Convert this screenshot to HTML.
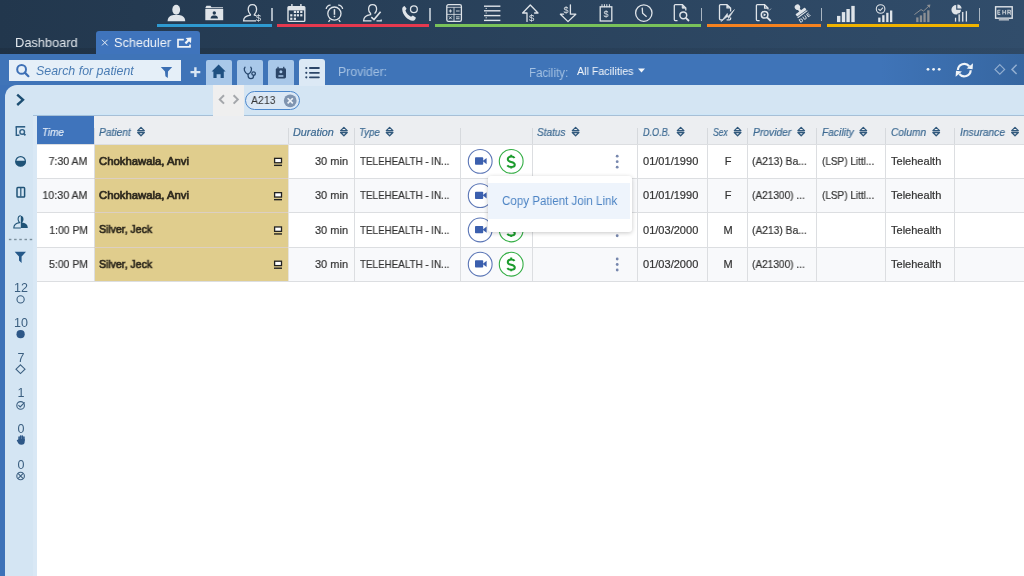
<!DOCTYPE html>
<html><head><meta charset="utf-8">
<style>
*{box-sizing:border-box;margin:0;padding:0}
html,body{width:1024px;height:576px;overflow:hidden;background:#fff;font-family:"Liberation Sans",sans-serif}
div{position:absolute;white-space:nowrap}
.t{line-height:1;will-change:transform}
</style></head><body>

<div style="left:0px;top:0px;width:1024px;height:54px;background:linear-gradient(90deg,#22374d 0%,#314d6b 100%);"></div>
<div style="left:0px;top:48px;width:1024px;height:6px;background:linear-gradient(90deg,rgba(0,0,0,0.10),rgba(0,0,0,0.05));"></div>
<div style="left:157px;top:24px;width:115px;height:3px;background:#2e9ad1;"></div>
<div style="left:277px;top:24px;width:152px;height:3px;background:#e5394f;"></div>
<div style="left:435px;top:24px;width:266px;height:3px;background:#79c25a;"></div>
<div style="left:707px;top:24px;width:114px;height:3px;background:#f5821f;"></div>
<div style="left:827px;top:24px;width:152px;height:3px;background:#f0b300;"></div>
<div style="left:271.25px;top:7.6px;width:1.5px;height:13.2px;background:#aab6c2;"></div>
<div style="left:429.25px;top:7.6px;width:1.5px;height:13.2px;background:#aab6c2;"></div>
<div style="left:700.75px;top:7.6px;width:1.5px;height:13.2px;background:#aab6c2;"></div>
<div style="left:820.75px;top:7.6px;width:1.5px;height:13.2px;background:#aab6c2;"></div>
<div style="left:978.75px;top:7.6px;width:1.5px;height:13.2px;background:#aab6c2;"></div>
<div class="t" style="left:15.3px;top:36.20px;font-size:13px;color:#e2e7ec;;transform:scaleX(0.9873);transform-origin:0 0">Dashboard</div>
<div style="left:96px;top:31px;width:104px;height:23px;background:#3f74bc;border-radius:3px 3px 0 0"></div>
<div class="t" style="left:113.8px;top:36.00px;font-size:13px;color:#f2f5f9;;transform:scaleX(0.9736);transform-origin:0 0">Scheduler</div>
<div style="left:0px;top:54px;width:1024px;height:50px;background:#3d72b8;"></div>
<div style="left:0px;top:54px;width:1024px;height:31px;background:linear-gradient(90deg,#3f74b8 0%,#3f74b8 86%,#3666a0 100%);"></div>
<div style="left:5px;top:85px;width:1019px;height:31px;background:#d4e5f3;border-radius:12px 0 0 0"></div>
<div style="left:33px;top:114px;width:180px;height:1px;background:#cde6f8;"></div>
<div style="left:33px;top:115px;width:180px;height:1px;background:#a7bfd6;"></div>
<div style="left:244px;top:114px;width:780px;height:1px;background:#cde6f8;"></div>
<div style="left:244px;top:115px;width:780px;height:1px;background:#a7bfd6;"></div>
<div style="left:0px;top:85px;width:5px;height:491px;background:#3d72b8;"></div>
<div style="left:5px;top:116px;width:32px;height:460px;background:#d4e5f3;"></div>
<div style="left:33px;top:116px;width:3.5px;height:460px;background:#d9e8f5;"></div>
<div style="left:8.5px;top:60px;width:172.5px;height:21px;background:#e5eff8;"></div>
<div class="t" style="left:35.5px;top:64.90px;font-size:12.4px;color:#4a7cb4;font-style:italic;transform:scaleX(0.9978);transform-origin:0 0">Search for patient</div>
<div style="left:206px;top:60px;width:26px;height:25px;background:#a9c8e9;border-radius:2px 2px 0 0"></div>
<div style="left:237px;top:60px;width:26px;height:25px;background:#a9c8e9;border-radius:2px 2px 0 0"></div>
<div style="left:268px;top:60px;width:26px;height:25px;background:#a9c8e9;border-radius:2px 2px 0 0"></div>
<div style="left:299px;top:59px;width:26px;height:27px;background:#dce9f5;border-radius:3px 3px 0 0"></div>
<div class="t" style="left:338.3px;top:66.02px;font-size:12.5px;color:#a3c0e2;;transform:scaleX(0.9814);transform-origin:0 0">Provider:</div>
<div class="t" style="left:529.2px;top:66.82px;font-size:12.5px;color:#a3c0e2;;transform:scaleX(0.9227);transform-origin:0 0">Facility:</div>
<div class="t" style="left:577.2px;top:66.29px;font-size:11px;color:#f3f6fa;;transform:scaleX(0.9728);transform-origin:0 0">All Facilities</div>
<div style="left:213px;top:85px;width:31px;height:31.5px;background:#efefef;"></div>
<div style="left:244.6px;top:91px;width:55px;height:18.8px;background:#dbe8f5;border:1.6px solid #4d88cc;border-radius:10px"></div>
<div class="t" style="left:250.5px;top:94.81px;font-size:11.8px;color:#333;;transform:scaleX(0.8925);transform-origin:0 0">A213</div>
<div style="left:37px;top:116px;width:987px;height:460px;background:#ffffff;"></div>
<div style="left:37px;top:116px;width:987px;height:28.2px;background:#eceef1;"></div>
<div style="left:37px;top:116px;width:57px;height:28.2px;background:#3f74bc;"></div>
<div style="left:94px;top:144.2px;width:194px;height:34.30000000000001px;background:#e0cd8d;"></div>
<div style="left:37px;top:178.5px;width:987px;height:34.30000000000001px;background:#f8f9fb;"></div>
<div style="left:94px;top:178.5px;width:194px;height:34.30000000000001px;background:#e0cd8d;"></div>
<div style="left:94px;top:212.8px;width:194px;height:34.29999999999998px;background:#e0cd8d;"></div>
<div style="left:37px;top:247.1px;width:987px;height:34.20000000000002px;background:#f8f9fb;"></div>
<div style="left:94px;top:247.1px;width:194px;height:34.20000000000002px;background:#e0cd8d;"></div>
<div style="left:37px;top:143.7px;width:987px;height:1px;background:#dcdee1;"></div>
<div style="left:37px;top:178.0px;width:987px;height:1px;background:#dcdee1;"></div>
<div style="left:37px;top:212.3px;width:987px;height:1px;background:#dcdee1;"></div>
<div style="left:37px;top:246.6px;width:987px;height:1px;background:#dcdee1;"></div>
<div style="left:37px;top:280.8px;width:987px;height:1px;background:#dcdee1;"></div>
<div style="left:93.5px;top:144.2px;width:1px;height:137.10000000000002px;background:#dcdee1;"></div>
<div style="left:93.5px;top:128px;width:1px;height:16.2px;background:#d6d9dd;"></div>
<div style="left:287.5px;top:144.2px;width:1px;height:137.10000000000002px;background:#e6e3dc;"></div>
<div style="left:287.5px;top:128px;width:1px;height:16.2px;background:#d6d9dd;"></div>
<div style="left:353.5px;top:144.2px;width:1px;height:137.10000000000002px;background:#dcdee1;"></div>
<div style="left:353.5px;top:128px;width:1px;height:16.2px;background:#d6d9dd;"></div>
<div style="left:459.5px;top:144.2px;width:1px;height:137.10000000000002px;background:#dcdee1;"></div>
<div style="left:459.5px;top:128px;width:1px;height:16.2px;background:#d6d9dd;"></div>
<div style="left:531.5px;top:144.2px;width:1px;height:137.10000000000002px;background:#dcdee1;"></div>
<div style="left:531.5px;top:128px;width:1px;height:16.2px;background:#d6d9dd;"></div>
<div style="left:636.5px;top:144.2px;width:1px;height:137.10000000000002px;background:#dcdee1;"></div>
<div style="left:636.5px;top:128px;width:1px;height:16.2px;background:#d6d9dd;"></div>
<div style="left:707.0px;top:144.2px;width:1px;height:137.10000000000002px;background:#dcdee1;"></div>
<div style="left:707.0px;top:128px;width:1px;height:16.2px;background:#d6d9dd;"></div>
<div style="left:747.1px;top:144.2px;width:1px;height:137.10000000000002px;background:#dcdee1;"></div>
<div style="left:747.1px;top:128px;width:1px;height:16.2px;background:#d6d9dd;"></div>
<div style="left:816.1px;top:144.2px;width:1px;height:137.10000000000002px;background:#dcdee1;"></div>
<div style="left:816.1px;top:128px;width:1px;height:16.2px;background:#d6d9dd;"></div>
<div style="left:885.2px;top:144.2px;width:1px;height:137.10000000000002px;background:#dcdee1;"></div>
<div style="left:885.2px;top:128px;width:1px;height:16.2px;background:#d6d9dd;"></div>
<div style="left:954.1px;top:144.2px;width:1px;height:137.10000000000002px;background:#dcdee1;"></div>
<div style="left:954.1px;top:128px;width:1px;height:16.2px;background:#d6d9dd;"></div>
<div style="left:94px;top:178.0px;width:194px;height:1px;background:#dccfc2;"></div>
<div style="left:94px;top:212.3px;width:194px;height:1px;background:#dccfc2;"></div>
<div style="left:94px;top:246.6px;width:194px;height:1px;background:#dccfc2;"></div>
<div class="t" style="left:41.5px;top:126.86px;font-size:10.8px;color:#e3ecf7;font-style:italic;-webkit-text-stroke:0.2px #e3ecf7;transform:scaleX(0.9119);transform-origin:0 0">Time</div>
<div class="t" style="left:99px;top:126.86px;font-size:10.8px;color:#3d6a92;font-style:italic;-webkit-text-stroke:0.2px #3d6a92;transform:scaleX(0.9487);transform-origin:0 0">Patient</div>
<div class="t" style="left:293px;top:126.86px;font-size:10.8px;color:#3d6a92;font-style:italic;-webkit-text-stroke:0.2px #3d6a92;transform:scaleX(0.9997);transform-origin:0 0">Duration</div>
<div class="t" style="left:359px;top:126.86px;font-size:10.8px;color:#3d6a92;font-style:italic;-webkit-text-stroke:0.2px #3d6a92;transform:scaleX(0.8964);transform-origin:0 0">Type</div>
<div class="t" style="left:537px;top:126.86px;font-size:10.8px;color:#3d6a92;font-style:italic;-webkit-text-stroke:0.2px #3d6a92;transform:scaleX(0.9278);transform-origin:0 0">Status</div>
<div class="t" style="left:642.7px;top:126.86px;font-size:10.8px;color:#3d6a92;font-style:italic;-webkit-text-stroke:0.2px #3d6a92;transform:scaleX(0.8424);transform-origin:0 0">D.O.B.</div>
<div class="t" style="left:713px;top:126.86px;font-size:10.8px;color:#3d6a92;font-style:italic;-webkit-text-stroke:0.2px #3d6a92;transform:scaleX(0.7899);transform-origin:0 0">Sex</div>
<div class="t" style="left:752.5px;top:126.86px;font-size:10.8px;color:#3d6a92;font-style:italic;-webkit-text-stroke:0.2px #3d6a92;transform:scaleX(0.9548);transform-origin:0 0">Provider</div>
<div class="t" style="left:821.5px;top:126.86px;font-size:10.8px;color:#3d6a92;font-style:italic;-webkit-text-stroke:0.2px #3d6a92;transform:scaleX(0.9466);transform-origin:0 0">Facility</div>
<div class="t" style="left:891px;top:126.86px;font-size:10.8px;color:#3d6a92;font-style:italic;-webkit-text-stroke:0.2px #3d6a92;transform:scaleX(0.9431);transform-origin:0 0">Column</div>
<div class="t" style="left:960px;top:126.86px;font-size:10.8px;color:#3d6a92;font-style:italic;-webkit-text-stroke:0.2px #3d6a92;transform:scaleX(0.9489);transform-origin:0 0">Insurance</div>
<div class="t" style="right:936.50px;top:156.14px;font-size:11px;color:#333333;-webkit-text-stroke:0.2px #333;transform:scaleX(0.9589);transform-origin:100% 0">7:30 AM</div>
<div class="t" style="left:99.2px;top:155.74px;font-size:11px;color:#2f2a1e;-webkit-text-stroke:0.7px #2f2a1e;transform:scaleX(1.0291);transform-origin:0 0">Chokhawala, Anvi</div>
<div class="t" style="right:676.20px;top:156.14px;font-size:11px;color:#333333;-webkit-text-stroke:0.2px #333;transform:scaleX(0.9991);transform-origin:100% 0">30 min</div>
<div class="t" style="left:359.7px;top:156.14px;font-size:11px;color:#333333;-webkit-text-stroke:0.2px #333;transform:scaleX(0.8926);transform-origin:0 0">TELEHEALTH - IN...</div>
<div class="t" style="left:642.7px;top:156.14px;font-size:11px;color:#333333;-webkit-text-stroke:0.2px #333;transform:scaleX(1.0043);transform-origin:0 0">01/01/1990</div>
<div class="t" style="left:677.50px;width:100px;text-align:center;top:156.14px;font-size:11px;color:#333333;-webkit-text-stroke:0.2px #333">F</div>
<div class="t" style="left:752.2px;top:156.14px;font-size:11px;color:#333333;-webkit-text-stroke:0.2px #333;transform:scaleX(0.9335);transform-origin:0 0">(A213) Ba...</div>
<div class="t" style="left:821.5px;top:156.14px;font-size:11px;color:#333333;-webkit-text-stroke:0.2px #333;transform:scaleX(0.9083);transform-origin:0 0">(LSP) Littl...</div>
<div class="t" style="left:890.9px;top:156.14px;font-size:11px;color:#333333;-webkit-text-stroke:0.2px #333;transform:scaleX(1.0029);transform-origin:0 0">Telehealth</div>
<div class="t" style="right:936.50px;top:190.44px;font-size:11px;color:#333333;-webkit-text-stroke:0.2px #333;transform:scaleX(0.9681);transform-origin:100% 0">10:30 AM</div>
<div class="t" style="left:99.2px;top:190.04px;font-size:11px;color:#2f2a1e;-webkit-text-stroke:0.7px #2f2a1e;transform:scaleX(1.0291);transform-origin:0 0">Chokhawala, Anvi</div>
<div class="t" style="right:676.20px;top:190.44px;font-size:11px;color:#333333;-webkit-text-stroke:0.2px #333;transform:scaleX(0.9991);transform-origin:100% 0">30 min</div>
<div class="t" style="left:359.7px;top:190.44px;font-size:11px;color:#333333;-webkit-text-stroke:0.2px #333;transform:scaleX(0.8926);transform-origin:0 0">TELEHEALTH - IN...</div>
<div class="t" style="left:642.7px;top:190.44px;font-size:11px;color:#333333;-webkit-text-stroke:0.2px #333;transform:scaleX(1.0043);transform-origin:0 0">01/01/1990</div>
<div class="t" style="left:677.50px;width:100px;text-align:center;top:190.44px;font-size:11px;color:#333333;-webkit-text-stroke:0.2px #333">F</div>
<div class="t" style="left:752.2px;top:190.44px;font-size:11px;color:#333333;-webkit-text-stroke:0.2px #333;transform:scaleX(0.9185);transform-origin:0 0">(A21300) ...</div>
<div class="t" style="left:821.5px;top:190.44px;font-size:11px;color:#333333;-webkit-text-stroke:0.2px #333;transform:scaleX(0.9083);transform-origin:0 0">(LSP) Littl...</div>
<div class="t" style="left:890.9px;top:190.44px;font-size:11px;color:#333333;-webkit-text-stroke:0.2px #333;transform:scaleX(1.0029);transform-origin:0 0">Telehealth</div>
<div class="t" style="right:936.50px;top:224.74px;font-size:11px;color:#333333;-webkit-text-stroke:0.2px #333;transform:scaleX(0.9422);transform-origin:100% 0">1:00 PM</div>
<div class="t" style="left:99.2px;top:224.34px;font-size:11px;color:#2f2a1e;-webkit-text-stroke:0.7px #2f2a1e;transform:scaleX(0.9525);transform-origin:0 0">Silver, Jeck</div>
<div class="t" style="right:676.20px;top:224.74px;font-size:11px;color:#333333;-webkit-text-stroke:0.2px #333;transform:scaleX(0.9991);transform-origin:100% 0">30 min</div>
<div class="t" style="left:359.7px;top:224.74px;font-size:11px;color:#333333;-webkit-text-stroke:0.2px #333;transform:scaleX(0.8926);transform-origin:0 0">TELEHEALTH - IN...</div>
<div class="t" style="left:642.7px;top:224.74px;font-size:11px;color:#333333;-webkit-text-stroke:0.2px #333;transform:scaleX(1.0043);transform-origin:0 0">01/03/2000</div>
<div class="t" style="left:677.50px;width:100px;text-align:center;top:224.74px;font-size:11px;color:#333333;-webkit-text-stroke:0.2px #333">M</div>
<div class="t" style="left:752.2px;top:224.74px;font-size:11px;color:#333333;-webkit-text-stroke:0.2px #333;transform:scaleX(0.9335);transform-origin:0 0">(A213) Ba...</div>
<div class="t" style="left:890.9px;top:224.74px;font-size:11px;color:#333333;-webkit-text-stroke:0.2px #333;transform:scaleX(1.0029);transform-origin:0 0">Telehealth</div>
<div class="t" style="right:936.50px;top:258.99px;font-size:11px;color:#333333;-webkit-text-stroke:0.2px #333;transform:scaleX(0.9495);transform-origin:100% 0">5:00 PM</div>
<div class="t" style="left:99.2px;top:258.59px;font-size:11px;color:#2f2a1e;-webkit-text-stroke:0.7px #2f2a1e;transform:scaleX(0.9525);transform-origin:0 0">Silver, Jeck</div>
<div class="t" style="right:676.20px;top:258.99px;font-size:11px;color:#333333;-webkit-text-stroke:0.2px #333;transform:scaleX(0.9991);transform-origin:100% 0">30 min</div>
<div class="t" style="left:359.7px;top:258.99px;font-size:11px;color:#333333;-webkit-text-stroke:0.2px #333;transform:scaleX(0.8926);transform-origin:0 0">TELEHEALTH - IN...</div>
<div class="t" style="left:642.7px;top:258.99px;font-size:11px;color:#333333;-webkit-text-stroke:0.2px #333;transform:scaleX(1.0043);transform-origin:0 0">01/03/2000</div>
<div class="t" style="left:677.50px;width:100px;text-align:center;top:258.99px;font-size:11px;color:#333333;-webkit-text-stroke:0.2px #333">M</div>
<div class="t" style="left:752.2px;top:258.99px;font-size:11px;color:#333333;-webkit-text-stroke:0.2px #333;transform:scaleX(0.9185);transform-origin:0 0">(A21300) ...</div>
<div class="t" style="left:890.9px;top:258.99px;font-size:11px;color:#333333;-webkit-text-stroke:0.2px #333;transform:scaleX(1.0029);transform-origin:0 0">Telehealth</div>
<div class="t" style="left:-29.00px;width:100px;text-align:center;top:282.22px;font-size:12.5px;color:#3b5f80;">12</div>
<div class="t" style="left:-29.00px;width:100px;text-align:center;top:317.02px;font-size:12.5px;color:#3b5f80;">10</div>
<div class="t" style="left:-29.00px;width:100px;text-align:center;top:351.82px;font-size:12.5px;color:#3b5f80;">7</div>
<div class="t" style="left:-29.00px;width:100px;text-align:center;top:387.22px;font-size:12.5px;color:#3b5f80;">1</div>
<div class="t" style="left:-29.00px;width:100px;text-align:center;top:422.62px;font-size:12.5px;color:#3b5f80;">0</div>
<div class="t" style="left:-29.00px;width:100px;text-align:center;top:458.62px;font-size:12.5px;color:#3b5f80;">0</div>
<svg style="position:absolute;left:0;top:0;will-change:transform" width="1024" height="576" viewBox="0 0 1024 576">
<ellipse cx="176.2" cy="9.8" rx="3.9" ry="5" fill="#dfe4e9"/>
<path d="M167.6 21.2 C167.6 17.2 170.5 15.4 173.5 15.1 L179 15.1 C182.2 15.4 185.2 17.2 185.2 21.2 Z" fill="#dfe4e9"/>
<path d="M205.5 7.3 L206.5 5.8 L210.5 5.8 L211.5 7.3 L223 7.3 L223 8.3 L205.5 8.3 Z" fill="#dfe4e9"/>
<rect x="205.3" y="9" width="17.9" height="11.2" fill="#dfe4e9"/>
<circle cx="214.3" cy="13" r="1.7" fill="#203a53"/>
<path d="M210.6 18.6 C210.6 16.3 212 15.6 213.3 15.5 L215.3 15.5 C216.6 15.6 218 16.3 218 18.6 Z" fill="#203a53"/>
<path d="M252.4 4.6 C249.8 4.6 248.2 6.8 248.2 9.6 C248.2 11.6 249.2 13.4 250.4 14.4 L250.4 15.2 C247.6 15.6 243.6 16.6 243.6 20.8 L256 20.8 M252.4 4.6 C255 4.6 256.6 6.8 256.6 9.6 C256.6 11.6 255.6 13.4 254.4 14.4 L254.4 15.2 C255.2 15.3 255.8 15.4 256.4 15.6" fill="none" stroke="#dfe4e9" stroke-width="1.3"/>
<text x="258.6" y="21" font-family="Liberation Sans" font-size="9" fill="#dfe4e9" text-anchor="middle">$</text>
<rect x="288" y="6.6" width="16.8" height="14.8" rx="1" fill="none" stroke="#dfe4e9" stroke-width="1.4"/>
<rect x="288" y="6.6" width="16.8" height="3.8" fill="#dfe4e9"/>
<rect x="291.2" y="4" width="1.4" height="4" fill="#dfe4e9"/><rect x="300.2" y="4" width="1.4" height="4" fill="#dfe4e9"/>
<rect x="293.79999999999995" y="10.8" width="2.2" height="2.2" fill="#dfe4e9"/>
<rect x="296.79999999999995" y="10.8" width="2.2" height="2.2" fill="#dfe4e9"/>
<rect x="300.2" y="10.8" width="2.2" height="2.2" fill="#dfe4e9"/>
<rect x="290.2" y="14.200000000000001" width="2.2" height="2.2" fill="#dfe4e9"/>
<rect x="293.79999999999995" y="14.200000000000001" width="2.2" height="2.2" fill="#dfe4e9"/>
<rect x="296.79999999999995" y="14.200000000000001" width="2.2" height="2.2" fill="#dfe4e9"/>
<rect x="300.2" y="14.200000000000001" width="2.2" height="2.2" fill="#dfe4e9"/>
<rect x="290.2" y="17.7" width="2.2" height="2.2" fill="#dfe4e9"/>
<rect x="293.79999999999995" y="17.7" width="2.2" height="2.2" fill="#dfe4e9"/>
<circle cx="334.4" cy="13.6" r="6.6" fill="none" stroke="#dfe4e9" stroke-width="1.3"/>
<path d="M326.2 9 A4 4 0 0 1 330.6 5.2 M338.2 5.2 A4 4 0 0 1 342.6 9" fill="none" stroke="#dfe4e9" stroke-width="1.3"/>
<path d="M328.5 21.8 L330 19.8 M340.3 21.8 L338.8 19.8" stroke="#dfe4e9" stroke-width="1.3"/>
<rect x="333.7" y="9.2" width="1.5" height="5.6" fill="#dfe4e9"/><rect x="333.7" y="15.8" width="1.5" height="1.5" fill="#dfe4e9"/>
<path d="M372.5 4.6 C370 4.6 368.6 6.6 368.6 9.2 C368.6 11 369.4 12.6 370.6 13.6 L370.6 14.6 C367.6 15 363.6 16 363.6 20.8 L371.5 20.8 M372.5 4.6 C375 4.6 376.6 6.6 376.6 9.2 C376.6 11 375.6 12.6 374.6 13.6 M376.5 20.8 L381.2 20.8 L381.2 19.6" fill="none" stroke="#dfe4e9" stroke-width="1.3"/>
<path d="M371.3 17.2 L374 19.6 L380.6 11.8" fill="none" stroke="#dfe4e9" stroke-width="1.6"/>
<path d="M404.6 6 L406.6 8.8 L405.4 10.6 C406.4 13.4 408.4 15.6 411 16.8 L412.8 15.4 L415.8 17.6 C415.8 19.6 414.6 20.8 413 20.8 C407.4 20.2 402.6 15 402.2 9.2 C402.2 7.6 403 6.4 404.6 6 Z" fill="#dfe4e9"/>
<circle cx="413.9" cy="9.3" r="3.4" fill="none" stroke="#dfe4e9" stroke-width="1.3"/>
<rect x="446.8" y="4.7" width="14.6" height="16.6" rx="1.6" fill="none" stroke="#dfe4e9" stroke-width="1.3"/>
<path d="M447 7.3 L461.2 7.3 M454 7.3 L454 21 M447 14.4 L461.2 14.4" stroke="#dfe4e9" stroke-width="0.8"/>
<path d="M448.8 11 L452 11 M450.4 9.4 L450.4 12.6 M456 11 L459.6 11 M449 16.4 L451.8 19.2 M451.8 16.4 L449 19.2 M456 16.9 L459.6 16.9 M456 18.7 L459.6 18.7" stroke="#dfe4e9" stroke-width="0.9"/>
<rect x="484" y="5.5" width="16.4" height="1.4" fill="#dfe4e9"/>
<rect x="484" y="10.100000000000001" width="16.4" height="1.4" fill="#dfe4e9"/>
<rect x="484" y="14.9" width="16.4" height="1.4" fill="#dfe4e9"/>
<rect x="484" y="19.7" width="16.4" height="1.4" fill="#dfe4e9"/>
<rect x="485.6" y="7.9" width="1.2" height="1" fill="#dfe4e9"/>
<rect x="485.6" y="12.5" width="1.2" height="1" fill="#dfe4e9"/>
<rect x="485.6" y="17.3" width="1.2" height="1" fill="#dfe4e9"/>
<path d="M527 21.4 L527 13 L522.6 13 L530.3 5 L538 13 L534.6 13" fill="none" stroke="#dfe4e9" stroke-width="1.3" stroke-linejoin="round" stroke-linecap="round"/>
<text x="531.6" y="20.8" font-family="Liberation Sans" font-size="9.5" fill="#dfe4e9" text-anchor="middle">$</text>
<path d="M570.4 4.8 L570.4 14.2 L575.8 14.2 L568 21.6 L560.4 14.2 L563.6 14.2" fill="none" stroke="#dfe4e9" stroke-width="1.3" stroke-linejoin="round" stroke-linecap="round"/>
<text x="566" y="12.8" font-family="Liberation Sans" font-size="9" fill="#dfe4e9" text-anchor="middle">$</text>
<rect x="600.2" y="6.8" width="11.6" height="14.2" fill="none" stroke="#dfe4e9" stroke-width="1.3"/>
<rect x="601.5" y="4.2" width="1" height="3" fill="#dfe4e9"/>
<rect x="603.9" y="4.2" width="1" height="3" fill="#dfe4e9"/>
<rect x="606.3" y="4.2" width="1" height="3" fill="#dfe4e9"/>
<rect x="608.9" y="4.2" width="1" height="3" fill="#dfe4e9"/>
<text x="605.9" y="17.4" font-family="Liberation Sans" font-size="9" fill="#dfe4e9" text-anchor="middle">$</text>
<circle cx="643.8" cy="13.1" r="8.2" fill="none" stroke="#dfe4e9" stroke-width="1.3"/>
<path d="M642.2 7.6 L642.6 13.2 L646.6 16.8" fill="none" stroke="#dfe4e9" stroke-width="1.3"/>
<path d="M677.5 20.6 L675.4 20.6 Q674.3 20.6 674.3 19.5 L674.3 5.6 Q674.3 4.6 675.4 4.6 L682.4 4.6 L685.8 8 L685.8 10.4" fill="none" stroke="#dfe4e9" stroke-width="1.3"/>
<path d="M682.2 4.8 L682.2 8.2 L685.6 8.2" fill="#dfe4e9" stroke="#dfe4e9" stroke-width="0.8"/>
<circle cx="683.3" cy="15.3" r="3.4" fill="none" stroke="#dfe4e9" stroke-width="1.5"/>
<path d="M685.8 17.8 L689 21" stroke="#dfe4e9" stroke-width="1.8"/>
<path d="M722.6 19.8 L720.5 19.8 Q719.5 19.8 719.5 18.8 L719.5 5.6 Q719.5 4.6 720.5 4.6 L727 4.6 L730.6 8 L730.6 11.6 M727 4.8 L727 7.8 L730.4 7.8 M726.6 19.8 L729.6 19.8 Q730.6 19.8 730.6 18.8 L730.6 17.4" fill="none" stroke="#dfe4e9" stroke-width="1.3"/>
<path d="M721 21.6 L727.3 13.4 L727.9 16.6 L734.4 9.6 L728.6 18.6 L727.6 16.4 Z" fill="#dfe4e9" stroke="#dfe4e9" stroke-width="0.6" stroke-linejoin="round"/>
<path d="M759.6 20.6 L757.4 20.6 Q756.4 20.6 756.4 19.5 L756.4 5.6 Q756.4 4.6 757.4 4.6 L764.6 4.6 L768 8 L768 9.6 M764.6 4.8 L764.6 8.2 L767.8 8.2" fill="none" stroke="#dfe4e9" stroke-width="1.3"/>
<circle cx="764.6" cy="14.8" r="3.3" fill="none" stroke="#dfe4e9" stroke-width="1.5"/>
<path d="M763.6 13.2 L766.2 14.8 L763.6 16.4 Z" fill="#dfe4e9"/>
<path d="M767 17.4 L770.8 21" stroke="#dfe4e9" stroke-width="1.8"/>
<path d="M769 10.6 L771 8.6" stroke="#dfe4e9" stroke-width="0.7"/>
<g transform="translate(1.2 -0.6) rotate(-36 801 12)"><circle cx="799.6" cy="5.8" r="2.7" fill="#dfe4e9"/><rect x="798.4" y="7.5" width="2.4" height="3.4" fill="#dfe4e9"/><rect x="793.8" y="10.4" width="11.6" height="2.8" rx="0.6" fill="#dfe4e9"/><rect x="793.6" y="13.9" width="12" height="1.1" fill="#dfe4e9"/><text x="799.6" y="20.4" font-family="Liberation Sans" font-weight="bold" font-size="5.4" fill="#dfe4e9" text-anchor="middle" letter-spacing="0.8">DUE</text></g>
<rect x="837" y="15.9" width="3.4" height="6.200000000000001" fill="#dfe4e9"/>
<rect x="841.8" y="12.1" width="3.4" height="10.000000000000002" fill="#dfe4e9"/>
<rect x="846.4" y="9" width="3.4" height="13.100000000000001" fill="#dfe4e9"/>
<rect x="851.3" y="5.9" width="3.4" height="16.200000000000003" fill="#dfe4e9"/>
<circle cx="880.6" cy="9" r="4.3" fill="none" stroke="#dfe4e9" stroke-width="1.1"/>
<path d="M878.4 9 L880.2 10.6 L883 7.6" fill="none" stroke="#dfe4e9" stroke-width="1.1"/>
<rect x="878.2" y="17.6" width="2.3" height="4.5" fill="#dfe4e9"/>
<rect x="882.2" y="15.2" width="2.3" height="6.900000000000002" fill="#dfe4e9"/>
<rect x="886.2" y="12.8" width="2.3" height="9.3" fill="#dfe4e9"/>
<rect x="890" y="10.5" width="2.3" height="11.600000000000001" fill="#dfe4e9"/>
<rect x="916.2" y="17.4" width="2.3" height="4.700000000000003" fill="#8c8f93"/>
<rect x="919.8" y="15.4" width="2.3" height="6.700000000000001" fill="#8c8f93"/>
<rect x="923.4" y="12.8" width="2.3" height="9.3" fill="#8c8f93"/>
<rect x="927.2" y="10.3" width="2.3" height="11.8" fill="#8c8f93"/>
<path d="M914.4 14.6 L921 9.6 L923.6 11 L929.4 5.6" fill="none" stroke="#8c8f93" stroke-width="1"/>
<path d="M930.4 4.4 L926.8 5 L929.8 8 Z" fill="#8c8f93"/>
<path d="M956.2 5 A4.8 4.8 0 1 0 961 9.8 L956.2 9.8 Z" fill="#dfe4e9"/>
<path d="M957.4 4.4 A4.4 4.4 0 0 1 961.6 8.6 L957.4 8.6 Z" fill="#dfe4e9"/>
<rect x="954.4" y="17.2" width="2.3" height="4.900000000000002" fill="#dfe4e9" stroke="#2e4966" stroke-width="0.9"/>
<rect x="958" y="13.9" width="2.3" height="8.200000000000001" fill="#dfe4e9" stroke="#2e4966" stroke-width="0.9"/>
<rect x="961.6" y="11.5" width="2.3" height="10.600000000000001" fill="#dfe4e9" stroke="#2e4966" stroke-width="0.9"/>
<rect x="965.2" y="10.7" width="2.3" height="11.400000000000002" fill="#dfe4e9" stroke="#2e4966" stroke-width="0.9"/>
<rect x="995.6" y="6.8" width="16.6" height="11.4" fill="none" stroke="#dfe4e9" stroke-width="1.4"/>
<rect x="998.8" y="18.4" width="10.2" height="2.2" fill="#aab4be"/>
<path d="M997.8 10 L997.8 14.6 M997.8 10.2 L1000.4 10.2 M997.8 12.3 L1000 12.3 M997.8 14.4 L1000.4 14.4 M1002.8 10 L1002.8 14.6 M1005.6 10 L1005.6 14.6 M1002.8 12.3 L1005.6 12.3 M1007.8 14.6 L1007.8 10.2 L1009.6 10.2 Q1010.8 10.2 1010.8 11.3 Q1010.8 12.4 1009.6 12.4 L1007.8 12.4 M1009.4 12.4 L1010.9 14.6" fill="none" stroke="#bfc7cf" stroke-width="1.1"/>
<path d="M102 39.8 L107.6 45.4 M107.6 39.8 L102 45.4" stroke="#e8eef5" stroke-width="1"/>
<path d="M183.8 39.7 L178 39.7 L178 46.8 L190 46.8 L190 44.4" fill="none" stroke="#f0f4f8" stroke-width="1.7"/>
<path d="M185.4 43.4 L189.6 39.2" fill="none" stroke="#f0f4f8" stroke-width="2.2"/><path d="M191.3 37.6 L185.6 37.9 L191 43.2 Z" fill="#f0f4f8"/>
<circle cx="21.6" cy="69.4" r="4.4" fill="none" stroke="#3d70b6" stroke-width="2"/>
<path d="M24.8 72.6 L28.4 76.2" stroke="#3d70b6" stroke-width="2.2" stroke-linecap="round"/>
<path d="M160.8 67 L172.2 67 L168 71.6 L167.8 78 L165.4 76.2 L165 71.6 Z" fill="#3b6fb3"/>
<path d="M195.4 67.2 L195.4 77 M190.5 72.1 L200.3 72.1" stroke="#d9e6f4" stroke-width="2.4"/>
<path d="M218.6 64.6 L211.6 71.6 L213.4 71.6 L213.4 78 L216.6 78 L216.6 74.2 L220.6 74.2 L220.6 78 L223.8 78 L223.8 71.6 L225.6 71.6 Z" fill="#1f5081"/>
<path d="M245 67.2 C243.6 68.6 244 72.4 248 74.4 C251.6 72.4 252.2 68.6 250.8 67.2 M248 74.4 C248 77 249 78.6 251 78.6 C253 78.6 253.6 77 253.6 75.4" fill="none" stroke="#28486e" stroke-width="1.3" stroke-linecap="round"/>
<circle cx="253.6" cy="73.6" r="1.8" fill="none" stroke="#28486e" stroke-width="1.3"/>
<rect x="275.8" y="68.2" width="10.2" height="10.2" rx="1.4" fill="#2c4668"/>
<rect x="277.4" y="66.8" width="1.3" height="2" fill="#2c4668"/><rect x="283.1" y="66.8" width="1.3" height="2" fill="#2c4668"/>
<circle cx="280.9" cy="71.8" r="1.5" fill="#a9c8e9"/><rect x="278.2" y="75.2" width="5.4" height="1.6" rx="0.8" fill="#a9c8e9"/>
<circle cx="306.3" cy="68" r="1.1" fill="#2c4668"/><rect x="309" y="67.1" width="10.8" height="1.8" rx="0.9" fill="#2c4668"/>
<circle cx="306.3" cy="72.8" r="1.1" fill="#2c4668"/><rect x="309" y="71.89999999999999" width="10.8" height="1.8" rx="0.9" fill="#2c4668"/>
<circle cx="306.3" cy="77.3" r="1.1" fill="#2c4668"/><rect x="309" y="76.39999999999999" width="10.8" height="1.8" rx="0.9" fill="#2c4668"/>
<circle cx="928" cy="69.3" r="1.4" fill="#f0f4f8"/>
<circle cx="933.6" cy="69.3" r="1.4" fill="#f0f4f8"/>
<circle cx="939.2" cy="69.3" r="1.4" fill="#f0f4f8"/>
<path d="M957.9 70 A6.4 6.4 0 0 1 969.2 66.2 M970.7 70.2 A6.4 6.4 0 0 1 959.4 74" fill="none" stroke="#f0f4f8" stroke-width="2.2"/>
<path d="M973 63.2 L972.6 69.2 L966.6 68.6 Z M955.6 76.8 L956 70.8 L962 71.4 Z" fill="#f0f4f8"/>
<path d="M999.8 64.6 L1004.6 69.4 L999.8 74.2 L995 69.4 Z" fill="none" stroke="#92aed0" stroke-width="1.2"/>
<path d="M1016.6 64.8 L1012 69.4 L1016.6 74" fill="none" stroke="#92aed0" stroke-width="1.5"/>
<path d="M638 68.6 L645 68.6 L641.5 72.4 Z" fill="#f3f6fa"/>
<path d="M17.2 94.6 L23 99.8 L17.2 105" fill="none" stroke="#1d4f73" stroke-width="2.4"/>
<path d="M15.6 126.8 L25.2 126.8" stroke="#2e5f85" stroke-width="1.6"/><path d="M16.3 126.8 L16.3 135.2 L19.4 135.2" fill="none" stroke="#2e5f85" stroke-width="1.4"/>
<circle cx="22.2" cy="131.9" r="2.3" fill="none" stroke="#2e5f85" stroke-width="1.4"/><path d="M23.8 133.6 L25.4 135.4" stroke="#2e5f85" stroke-width="1.6"/>
<circle cx="20.6" cy="161.4" r="4.8" fill="none" stroke="#1f5377" stroke-width="1.2"/><path d="M15.2 160.8 L26 160.8 A5.4 5.4 0 0 1 15.2 160.8 Z" fill="#1f5377"/>
<rect x="17" y="187.6" width="7.6" height="9.4" rx="0.8" fill="none" stroke="#1f5377" stroke-width="1.5"/><path d="M20.8 188 L20.8 196.6" stroke="#1f5377" stroke-width="1.2"/>
<path d="M20.8 215.8 C19.2 215.8 18.1 217.2 18.1 219.2 C18.1 220.6 18.8 221.8 19.6 222.6 C16.4 223 13.8 224.4 13.8 228 L20.8 228" fill="none" stroke="#1f5377" stroke-width="1.1"/>
<path d="M20.8 215.8 C22.4 215.8 23.5 217.2 23.5 219.2 C23.5 220.6 22.8 221.8 22 222.6 C25.2 223 27.8 224.4 27.8 228 L20.8 228 Z" fill="#1f5377"/>
<rect x="8.9" y="238.8" width="2.5" height="1.4" fill="#7a8e9c"/>
<rect x="14.100000000000001" y="238.8" width="2.5" height="1.4" fill="#7a8e9c"/>
<rect x="19.3" y="238.8" width="2.5" height="1.4" fill="#7a8e9c"/>
<rect x="24.5" y="238.8" width="2.5" height="1.4" fill="#7a8e9c"/>
<rect x="29.700000000000003" y="238.8" width="2.5" height="1.4" fill="#7a8e9c"/>
<path d="M14.7 251.8 L26 251.8 L21.6 256.6 L21.6 263 L19 260.6 L19 256.6 Z" fill="#25598a"/>
<circle cx="20.6" cy="299.4" r="3.6" fill="none" stroke="#3b5f80" stroke-width="1.1"/>
<circle cx="20.6" cy="334.2" r="4.1" fill="#2d5787"/>
<path d="M20.5 364.8 L25 369.2 L20.5 373.6 L16 369.2 Z" fill="none" stroke="#3b5f80" stroke-width="1.1"/>
<circle cx="20.6" cy="405.4" r="3.8" fill="none" stroke="#3b5f80" stroke-width="1.1"/><path d="M18.4 405.2 L20.2 407 L24.6 402.4" fill="none" stroke="#3b5f80" stroke-width="1.1"/>
<g fill="#2d5787"><rect x="18.3" y="436.2" width="1.6" height="5" rx="0.8"/><rect x="19.9" y="435.2" width="1.6" height="5" rx="0.8"/><rect x="21.5" y="435.3" width="1.6" height="5" rx="0.8"/><rect x="23.1" y="436.3" width="1.6" height="5" rx="0.8"/><path d="M18.3 439 L24.7 439 L24.7 441.6 Q24.7 444.8 21.6 444.8 Q19.4 444.8 18.4 443.4 L16.8 440.6 Q16.6 439.6 17.6 439.8 L18.4 440.6 Z"/></g>
<circle cx="20.6" cy="476" r="3.8" fill="none" stroke="#3b5f80" stroke-width="1.1"/><path d="M18 473.4 L23.2 478.6 M23.2 473.4 L18 478.6" stroke="#3b5f80" stroke-width="1.1"/>
<path d="M224 95.2 L219.8 99.4 L224 103.6 M233.6 95.2 L237.8 99.4 L233.6 103.6" fill="none" stroke="#a4a7ab" stroke-width="2"/>
<circle cx="290.2" cy="100.8" r="6.4" fill="#7f94b0"/><path d="M287.6 98.2 L292.8 103.4 M292.8 98.2 L287.6 103.4" stroke="#eef3f8" stroke-width="1.6"/>
<path d="M137.7 130.6 L141 127.4 L144.3 130.6 Z M137.7 132.5 L141 135.7 L144.3 132.5 Z" fill="none" stroke="#30587c" stroke-width="1.3" stroke-linejoin="round"/>
<path d="M340.59999999999997 130.6 L343.9 127.4 L347.2 130.6 Z M340.59999999999997 132.5 L343.9 135.7 L347.2 132.5 Z" fill="none" stroke="#30587c" stroke-width="1.3" stroke-linejoin="round"/>
<path d="M386.3 130.6 L389.6 127.4 L392.90000000000003 130.6 Z M386.3 132.5 L389.6 135.7 L392.90000000000003 132.5 Z" fill="none" stroke="#30587c" stroke-width="1.3" stroke-linejoin="round"/>
<path d="M572.3000000000001 130.6 L575.6 127.4 L578.9 130.6 Z M572.3000000000001 132.5 L575.6 135.7 L578.9 132.5 Z" fill="none" stroke="#30587c" stroke-width="1.3" stroke-linejoin="round"/>
<path d="M677.3000000000001 130.6 L680.6 127.4 L683.9 130.6 Z M677.3000000000001 132.5 L680.6 135.7 L683.9 132.5 Z" fill="none" stroke="#30587c" stroke-width="1.3" stroke-linejoin="round"/>
<path d="M734.3000000000001 130.6 L737.6 127.4 L740.9 130.6 Z M734.3000000000001 132.5 L737.6 135.7 L740.9 132.5 Z" fill="none" stroke="#30587c" stroke-width="1.3" stroke-linejoin="round"/>
<path d="M797.9000000000001 130.6 L801.2 127.4 L804.5 130.6 Z M797.9000000000001 132.5 L801.2 135.7 L804.5 132.5 Z" fill="none" stroke="#30587c" stroke-width="1.3" stroke-linejoin="round"/>
<path d="M860.0 130.6 L863.3 127.4 L866.5999999999999 130.6 Z M860.0 132.5 L863.3 135.7 L866.5999999999999 132.5 Z" fill="none" stroke="#30587c" stroke-width="1.3" stroke-linejoin="round"/>
<path d="M932.9000000000001 130.6 L936.2 127.4 L939.5 130.6 Z M932.9000000000001 132.5 L936.2 135.7 L939.5 132.5 Z" fill="none" stroke="#30587c" stroke-width="1.3" stroke-linejoin="round"/>
<path d="M1011.7 130.6 L1015 127.4 L1018.3 130.6 Z M1011.7 132.5 L1015 135.7 L1018.3 132.5 Z" fill="none" stroke="#30587c" stroke-width="1.3" stroke-linejoin="round"/>
<rect x="274.6" y="158.35" width="6.9" height="4.4" fill="#fff" stroke="#222" stroke-width="1.3"/><rect x="274" y="164.65" width="8" height="1.4" fill="#222"/>
<circle cx="480.2" cy="161.35" r="11.9" fill="#fff" stroke="#5b76b6" stroke-width="1.1"/>
<rect x="475" y="157.35" width="8.2" height="7.4" rx="0.8" fill="#3b5fae"/><path d="M482.6 161.04999999999998 L486.6 157.95 L486.6 164.15 Z" fill="#3b5fae"/>
<circle cx="511.2" cy="161.35" r="11.9" fill="#fff" stroke="#34ae45" stroke-width="1.1"/>
<g transform="translate(0 0.09999999999999432)"><path d="M514.6 157.9 C513.9 156.9 512.7 156.5 511.2 156.5 C509.2 156.5 507.8 157.6 507.8 159.2 C507.8 160.9 509.4 161.4 511.2 161.8 C513.1 162.2 514.8 162.8 514.8 164.6 C514.8 166.1 513.3 166.9 511.2 166.9 C509.5 166.9 508.1 166.3 507.3 165.2 M511.2 154.6 L511.2 156.6 M511.2 166.8 L511.2 168.3" fill="none" stroke="#1b9b2c" stroke-width="2"/></g>
<circle cx="617.2" cy="156.15" r="1.4" fill="#7787ae"/>
<circle cx="617.2" cy="161.65" r="1.4" fill="#7787ae"/>
<circle cx="617.2" cy="167.15" r="1.4" fill="#7787ae"/>
<rect x="274.6" y="192.65" width="6.9" height="4.4" fill="#fff" stroke="#222" stroke-width="1.3"/><rect x="274" y="198.95000000000002" width="8" height="1.4" fill="#222"/>
<circle cx="480.2" cy="195.65" r="11.9" fill="#fff" stroke="#5b76b6" stroke-width="1.1"/>
<rect x="475" y="191.65" width="8.2" height="7.4" rx="0.8" fill="#3b5fae"/><path d="M482.6 195.35 L486.6 192.25 L486.6 198.45000000000002 Z" fill="#3b5fae"/>
<circle cx="511.2" cy="195.65" r="11.9" fill="#fff" stroke="#34ae45" stroke-width="1.1"/>
<g transform="translate(0 34.400000000000006)"><path d="M514.6 157.9 C513.9 156.9 512.7 156.5 511.2 156.5 C509.2 156.5 507.8 157.6 507.8 159.2 C507.8 160.9 509.4 161.4 511.2 161.8 C513.1 162.2 514.8 162.8 514.8 164.6 C514.8 166.1 513.3 166.9 511.2 166.9 C509.5 166.9 508.1 166.3 507.3 165.2 M511.2 154.6 L511.2 156.6 M511.2 166.8 L511.2 168.3" fill="none" stroke="#1b9b2c" stroke-width="2"/></g>
<circle cx="617.2" cy="190.45000000000002" r="1.4" fill="#7787ae"/>
<circle cx="617.2" cy="195.95000000000002" r="1.4" fill="#7787ae"/>
<circle cx="617.2" cy="201.45000000000002" r="1.4" fill="#7787ae"/>
<rect x="274.6" y="226.95" width="6.9" height="4.4" fill="#fff" stroke="#222" stroke-width="1.3"/><rect x="274" y="233.25" width="8" height="1.4" fill="#222"/>
<circle cx="480.2" cy="229.95" r="11.9" fill="#fff" stroke="#5b76b6" stroke-width="1.1"/>
<rect x="475" y="225.95" width="8.2" height="7.4" rx="0.8" fill="#3b5fae"/><path d="M482.6 229.64999999999998 L486.6 226.54999999999998 L486.6 232.75 Z" fill="#3b5fae"/>
<circle cx="511.2" cy="229.95" r="11.9" fill="#fff" stroke="#34ae45" stroke-width="1.1"/>
<g transform="translate(0 68.69999999999999)"><path d="M514.6 157.9 C513.9 156.9 512.7 156.5 511.2 156.5 C509.2 156.5 507.8 157.6 507.8 159.2 C507.8 160.9 509.4 161.4 511.2 161.8 C513.1 162.2 514.8 162.8 514.8 164.6 C514.8 166.1 513.3 166.9 511.2 166.9 C509.5 166.9 508.1 166.3 507.3 165.2 M511.2 154.6 L511.2 156.6 M511.2 166.8 L511.2 168.3" fill="none" stroke="#1b9b2c" stroke-width="2"/></g>
<circle cx="617.2" cy="224.75" r="1.4" fill="#7787ae"/>
<circle cx="617.2" cy="230.25" r="1.4" fill="#7787ae"/>
<circle cx="617.2" cy="235.75" r="1.4" fill="#7787ae"/>
<rect x="274.6" y="261.2" width="6.9" height="4.4" fill="#fff" stroke="#222" stroke-width="1.3"/><rect x="274" y="267.5" width="8" height="1.4" fill="#222"/>
<circle cx="480.2" cy="264.2" r="11.9" fill="#fff" stroke="#5b76b6" stroke-width="1.1"/>
<rect x="475" y="260.2" width="8.2" height="7.4" rx="0.8" fill="#3b5fae"/><path d="M482.6 263.9 L486.6 260.8 L486.6 267.0 Z" fill="#3b5fae"/>
<circle cx="511.2" cy="264.2" r="11.9" fill="#fff" stroke="#34ae45" stroke-width="1.1"/>
<g transform="translate(0 102.94999999999999)"><path d="M514.6 157.9 C513.9 156.9 512.7 156.5 511.2 156.5 C509.2 156.5 507.8 157.6 507.8 159.2 C507.8 160.9 509.4 161.4 511.2 161.8 C513.1 162.2 514.8 162.8 514.8 164.6 C514.8 166.1 513.3 166.9 511.2 166.9 C509.5 166.9 508.1 166.3 507.3 165.2 M511.2 154.6 L511.2 156.6 M511.2 166.8 L511.2 168.3" fill="none" stroke="#1b9b2c" stroke-width="2"/></g>
<circle cx="617.2" cy="259.0" r="1.4" fill="#7787ae"/>
<circle cx="617.2" cy="264.5" r="1.4" fill="#7787ae"/>
<circle cx="617.2" cy="270.0" r="1.4" fill="#7787ae"/>
</svg>
<div style="left:487.5px;top:176px;width:144.5px;height:56px;background:#ffffff;border-radius:3px;box-shadow:0 1px 4px rgba(0,0,0,0.22)"></div>
<div style="left:487.5px;top:182.7px;width:142px;height:36px;background:#eef4fc;"></div>
<div class="t" style="left:502px;top:195.32px;font-size:12.5px;color:#4d84c4;;transform:scaleX(0.9261);transform-origin:0 0">Copy Patient Join Link</div>
</body></html>
